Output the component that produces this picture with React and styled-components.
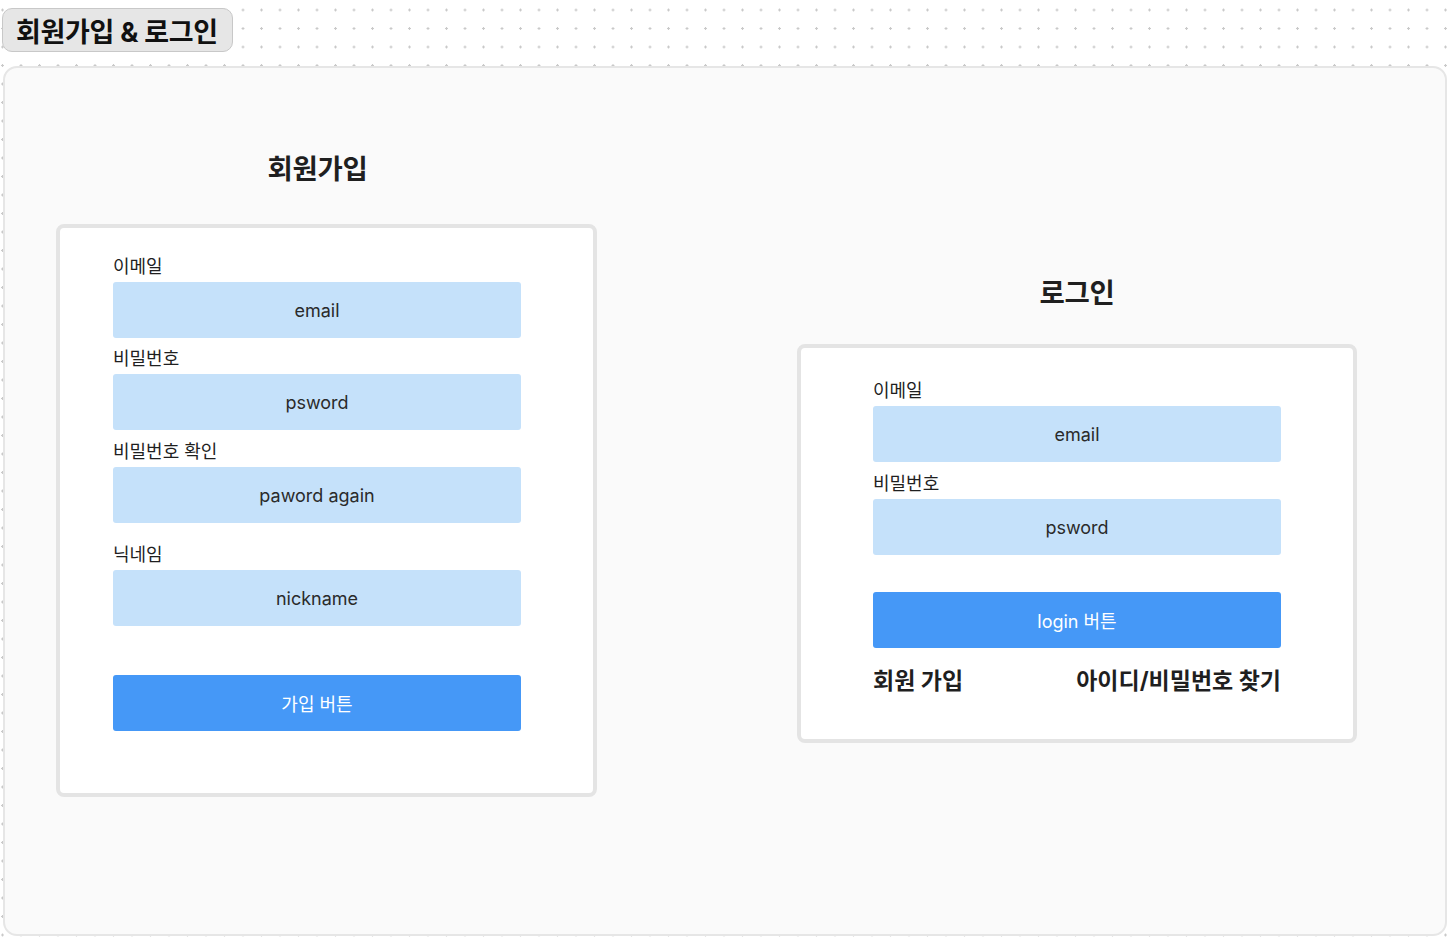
import React from "react";
import styled, { createGlobalStyle } from "styled-components";

const KR = `"Inter", "Noto Sans CJK KR", sans-serif`;
const INPUT_BLUE = "#c5e1fa";
const BUTTON_BLUE = "#4598f7";
const TEXT = "#1f1f1f";

const GlobalStyle = createGlobalStyle`
  html, body {
    margin: 0;
    padding: 0;
  }
  body {
    width: 1454px;
    height: 946px;
    overflow: hidden;
    font-family: ${KR};
    color: ${TEXT};
    background-color: #ffffff;
    background-image: radial-gradient(circle, #c9c9c9 1px, transparent 1.4px);
    background-size: 18.5px 18.5px;
    background-position: -6.75px 0.75px;
  }
`;

const Board = styled.div`
  display: flex;
  flex-direction: column;
  align-items: flex-start;
  padding: 8px 7px 10px 3px;
  gap: 14px;
  height: 946px;
  box-sizing: border-box;
`;

const Badge = styled.div`
  display: flex;
  align-items: center;
  height: 44px;
  box-sizing: border-box;
  padding: 0 14px 0 13px;
  margin-left: -1px;
  background: #e6e6e6;
  border: 1px solid #c8c8c8;
  border-radius: 10px;
  font-size: 27px;
  font-weight: 700;
  letter-spacing: -0.3px;
  color: #111;
`;

const Frame = styled.div`
  flex: 1;
  align-self: stretch;
  display: flex;
  align-items: flex-start;
  gap: 200px;
  padding-left: 51px;
  background: #fafafa;
  border: 2px solid #e6e6e6;
  border-radius: 14px;
`;

const Column = styled.div`
  display: flex;
  flex-direction: column;
  gap: ${(p) => p.$gap}px;
  margin-top: ${(p) => p.$top}px;
  width: ${(p) => p.$width}px;
`;

const Title = styled.h2`
  margin: 0;
  text-align: center;
  padding-right: ${(p) => p.$shift || 0}px;
  font-size: 27.5px;
  line-height: 34px;
  font-weight: 700;
  letter-spacing: -0.3px;
  color: ${TEXT};
`;

const Card = styled.div`
  display: flex;
  flex-direction: column;
  background: #ffffff;
  border: 4px solid #e4e4e4;
  border-radius: 8px;
  padding: ${(p) => p.$pad};
`;

const Field = styled.div`
  display: flex;
  flex-direction: column;
  gap: 4px;
  margin-top: ${(p) => p.$top || 0}px;
`;

const Label = styled.label`
  padding-top: 2px;
  font-size: 18px;
  line-height: 22px;
  color: ${TEXT};
`;

const InputBox = styled.div`
  width: 408px;
  height: 56px;
  display: flex;
  align-items: center;
  justify-content: center;
  background: ${INPUT_BLUE};
  border-radius: 3px;
  font-size: 18px;
  color: #2a2a2a;
`;

const Button = styled.div`
  width: 408px;
  height: 56px;
  display: flex;
  align-items: center;
  justify-content: center;
  margin-top: ${(p) => p.$top}px;
  background: ${BUTTON_BLUE};
  border-radius: 3px;
  font-size: 18px;
  color: #ffffff;
`;

const Links = styled.div`
  width: 408px;
  display: flex;
  justify-content: space-between;
  margin-top: 19px;
  font-size: 23px;
  line-height: 28px;
  font-weight: 700;
  color: ${TEXT};
`;

const signupFields = [
  { label: "이메일", value: "email", top: 0 },
  { label: "비밀번호", value: "psword", top: 8 },
  { label: "비밀번호 확인", value: "paword again", top: 9 },
  { label: "닉네임", value: "nickname", top: 19 },
];

const loginFields = [
  { label: "이메일", value: "email", top: 0 },
  { label: "비밀번호", value: "psword", top: 9 },
];

const FieldList = ({ fields }) =>
  fields.map((f) => (
    <Field key={f.label} $top={f.top}>
      <Label>{f.label}</Label>
      <InputBox>{f.value}</InputBox>
    </Field>
  ));

export default function App() {
  return (
    <>
      <GlobalStyle />
      <Board>
        <Badge>회원가입 &amp; 로그인</Badge>
        <Frame>
          <Column $gap={38} $top={84} $width={541}>
            <Title $shift={18}>회원가입</Title>
            <Card $pad="26px 72px 62px 53px">
              <FieldList fields={signupFields} />
              <Button $top={49}>가입 버튼</Button>
            </Card>
          </Column>
          <Column $gap={34} $top={208} $width={560}>
            <Title>로그인</Title>
            <Card $pad="30px 72px 44px 72px">
              <FieldList fields={loginFields} />
              <Button $top={37}>login 버튼</Button>
              <Links>
                <span>회원 가입</span>
                <span>아이디/비밀번호 찾기</span>
              </Links>
            </Card>
          </Column>
        </Frame>
      </Board>
    </>
  );
}
